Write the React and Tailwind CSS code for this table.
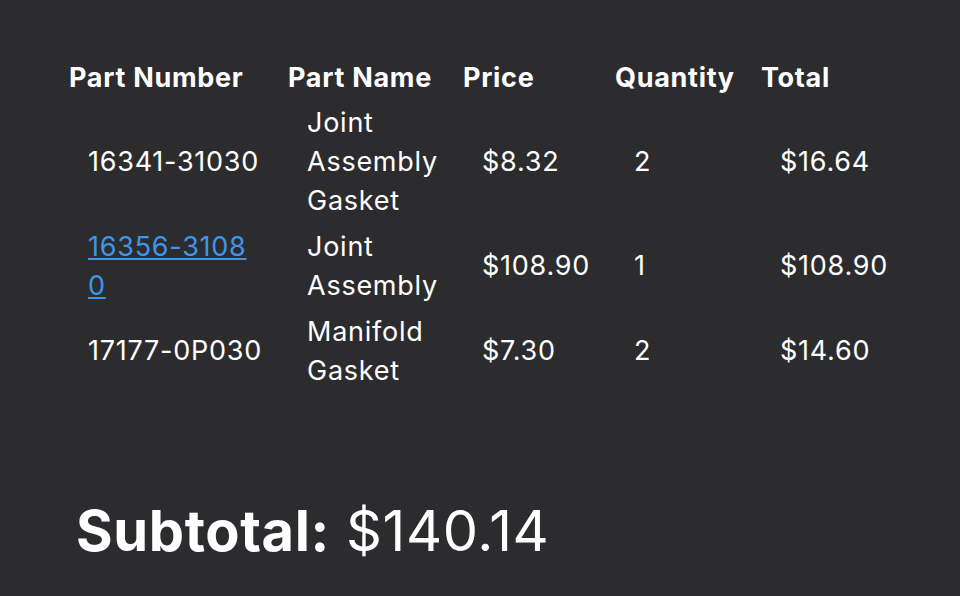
import React from 'react';

const rows = [
  { number: '16341-31030', name: 'Joint Assembly Gasket', price: '$8.32', qty: 2, total: '$16.64' },
  { number: '16356-31080', name: 'Joint Assembly', price: '$108.90', qty: 1, total: '$108.90', link: true },
  { number: '17177-0P030', name: 'Manifold Gasket', price: '$7.30', qty: 2, total: '$14.60' },
];

export default function App() {
  return (
    <div className="min-h-[596px] w-[960px] bg-[#2c2c2e] text-white pt-[58px] pl-[69px] font-['Inter',sans-serif]">
      {/* Parts table */}
      <table className="border-collapse text-left text-[27px] leading-[39px] tracking-[0.75px]">
        <thead>
          <tr>
            <th className="w-[219px] p-0 pb-[2px] font-bold tracking-[0.7px]">Part Number</th>
            <th className="w-[175px] p-0 pb-[2px] font-bold tracking-[0.7px]">Part Name</th>
            <th className="w-[152px] p-0 pb-[2px] font-bold tracking-[0.7px]">Price</th>
            <th className="w-[146px] p-0 pb-[2px] font-bold tracking-[0.7px]">Quantity</th>
            <th className="w-[146px] p-0 pb-[2px] font-bold tracking-[0.7px]">Total</th>
          </tr>
        </thead>
        <tbody>
          {rows.map((r) => (
            <tr key={r.number}>
              <td className="px-[19px] py-[3.5px] align-middle">
                {r.link ? (
                  <a href="#" className="text-[#3f95e8] underline">16356-3108<br />0</a>
                ) : (
                  r.number
                )}
              </td>
              <td className="px-[19px] py-[3.5px] align-middle">{r.name}</td>
              <td className="px-[19px] py-[3.5px] align-middle">{r.price}</td>
              <td className="px-[19px] py-[3.5px] align-middle">{r.qty}</td>
              <td className="px-[19px] py-[3.5px] align-middle">{r.total}</td>
            </tr>
          ))}
        </tbody>
      </table>

      <div className="mt-[106px] pl-[7px] text-[56px] leading-[64px] tracking-[0.6px]">
        <span className="font-bold">Subtotal:</span> $140.14
      </div>
    </div>
  );
}
